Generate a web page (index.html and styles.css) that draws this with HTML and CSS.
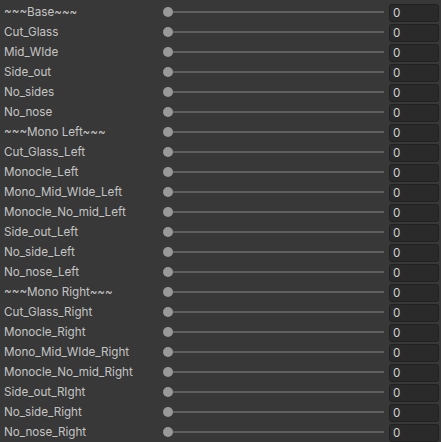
FILE: index.html
```html
<!DOCTYPE html>
<html>
<head>
<meta charset="utf-8">
<link rel="stylesheet" href="styles.css">
</head>
<body>
<div class="list">
  <div class="row"><span class="label">~~~Base~~~</span><div class="slider"><span class="knob"></span><span class="track"></span></div><div class="field">0</div></div>
  <div class="row"><span class="label">Cut_Glass</span><div class="slider"><span class="knob"></span><span class="track"></span></div><div class="field">0</div></div>
  <div class="row"><span class="label">Mid_WIde</span><div class="slider"><span class="knob"></span><span class="track"></span></div><div class="field">0</div></div>
  <div class="row"><span class="label">Side_out</span><div class="slider"><span class="knob"></span><span class="track"></span></div><div class="field">0</div></div>
  <div class="row"><span class="label">No_sides</span><div class="slider"><span class="knob"></span><span class="track"></span></div><div class="field">0</div></div>
  <div class="row"><span class="label">No_nose</span><div class="slider"><span class="knob"></span><span class="track"></span></div><div class="field">0</div></div>
  <div class="row"><span class="label">~~~Mono Left~~~</span><div class="slider"><span class="knob"></span><span class="track"></span></div><div class="field">0</div></div>
  <div class="row"><span class="label">Cut_Glass_Left</span><div class="slider"><span class="knob"></span><span class="track"></span></div><div class="field">0</div></div>
  <div class="row"><span class="label">Monocle_Left</span><div class="slider"><span class="knob"></span><span class="track"></span></div><div class="field">0</div></div>
  <div class="row"><span class="label">Mono_Mid_WIde_Left</span><div class="slider"><span class="knob"></span><span class="track"></span></div><div class="field">0</div></div>
  <div class="row"><span class="label">Monocle_No_mid_Left</span><div class="slider"><span class="knob"></span><span class="track"></span></div><div class="field">0</div></div>
  <div class="row"><span class="label">Side_out_Left</span><div class="slider"><span class="knob"></span><span class="track"></span></div><div class="field">0</div></div>
  <div class="row"><span class="label">No_side_Left</span><div class="slider"><span class="knob"></span><span class="track"></span></div><div class="field">0</div></div>
  <div class="row"><span class="label">No_nose_Left</span><div class="slider"><span class="knob"></span><span class="track"></span></div><div class="field">0</div></div>
  <div class="row"><span class="label">~~~Mono Right~~~</span><div class="slider"><span class="knob"></span><span class="track"></span></div><div class="field">0</div></div>
  <div class="row"><span class="label">Cut_Glass_Right</span><div class="slider"><span class="knob"></span><span class="track"></span></div><div class="field">0</div></div>
  <div class="row"><span class="label">Monocle_Right</span><div class="slider"><span class="knob"></span><span class="track"></span></div><div class="field">0</div></div>
  <div class="row"><span class="label">Mono_Mid_WIde_Right</span><div class="slider"><span class="knob"></span><span class="track"></span></div><div class="field">0</div></div>
  <div class="row"><span class="label">Monocle_No_mid_Right</span><div class="slider"><span class="knob"></span><span class="track"></span></div><div class="field">0</div></div>
  <div class="row"><span class="label">Side_out_RIght</span><div class="slider"><span class="knob"></span><span class="track"></span></div><div class="field">0</div></div>
  <div class="row"><span class="label">No_side_Right</span><div class="slider"><span class="knob"></span><span class="track"></span></div><div class="field">0</div></div>
  <div class="row"><span class="label">No_nose_Right</span><div class="slider"><span class="knob"></span><span class="track"></span></div><div class="field">0</div></div>
</div>
</body>
</html>
```
FILE: styles.css
```css
html, body {
  margin: 0;
  padding: 0;
  background: #383838;
}
body {
  font-family: Inter, "Noto Sans", sans-serif;
  font-size: 11.65px;
  color: #c4c4c4;
  width: 441px;
  height: 442px;
  overflow: hidden;
}
.list {
  display: flex;
  flex-direction: column;
}
.row {
  display: grid;
  grid-template-columns: 154px 221px 50px;
  column-gap: 5px;
  height: 20px;
  padding-left: 4px;
  align-items: center;
}
.label {
  white-space: nowrap;
  line-height: 20px;
  padding-top: 2px;
}
.slider {
  display: flex;
  align-items: center;
  height: 20px;
}
.knob {
  width: 10px;
  height: 10px;
  border-radius: 50%;
  background: #999999;
  flex: none;
  margin-top: 1px;
}
.track {
  flex: 1;
  height: 2px;
  background: #5e5e5e;
  margin-top: 1px;
}
.field {
  align-self: end;
  box-sizing: border-box;
  height: 18px;
  background: #2a2a2a;
  border: 1px solid #212121;
  border-radius: 3px;
  color: #d2d2d2;
  padding-left: 3px;
  line-height: 16px;
}
```
